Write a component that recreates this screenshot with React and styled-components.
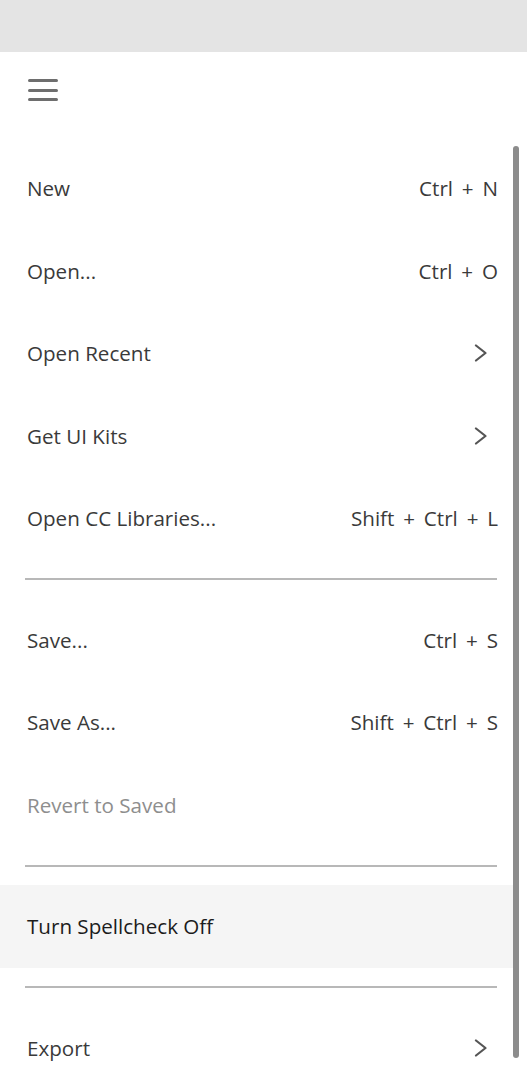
import React from 'react'
import styled, { createGlobalStyle } from 'styled-components'

const GlobalStyle = createGlobalStyle`
  html, body {
    margin: 0;
    padding: 0;
    background: #ffffff;
  }
  body {
    font-family: "Open Sans", "Noto Sans", "Liberation Sans", sans-serif;
    -webkit-font-smoothing: antialiased;
  }
`

const menu = [
  [
    { label: 'New', shortcut: 'Ctrl + N' },
    { label: 'Open...', shortcut: 'Ctrl + O' },
    { label: 'Open Recent', sub: true },
    { label: 'Get UI Kits', sub: true },
    { label: 'Open CC Libraries...', shortcut: 'Shift + Ctrl + L' },
  ],
  [
    { label: 'Save...', shortcut: 'Ctrl + S' },
    { label: 'Save As...', shortcut: 'Shift + Ctrl + S' },
    { label: 'Revert to Saved', disabled: true },
  ],
  [{ label: 'Turn Spellcheck Off', active: true }],
  [{ label: 'Export', sub: true }],
]

export default function App() {
  return (
    <Page>
      <GlobalStyle />
      <TopBar />
      <Header>
        <MenuButton aria-label='menu'>
          <span />
          <span />
          <span />
        </MenuButton>
      </Header>
      <List>
        {menu.map((group, gi) => (
          <React.Fragment key={gi}>
            {gi > 0 && <Divider />}
            {group.map((item) => (
              <Row key={item.label} $active={item.active}>
                <Label $disabled={item.disabled} $active={item.active}>
                  {item.label}
                </Label>
                {item.shortcut && <Shortcut>{item.shortcut}</Shortcut>}
                {item.sub && (
                  <Chevron viewBox='0 0 14 18'>
                    <path d='M2 1.5 L11.5 9 L2 16.5' />
                  </Chevron>
                )}
              </Row>
            ))}
          </React.Fragment>
        ))}
        <ScrollThumb />
      </List>
    </Page>
  )
}

const Page = styled.div`
  width: 527px;
  height: 1080px;
  overflow: hidden;
  background: #ffffff;
`

const TopBar = styled.div`
  height: 52px;
  background: #e4e4e4;
`

const Header = styled.div`
  height: 95px;
  display: flex;
  align-items: flex-start;
  padding: 27px 0 0 28px;
  box-sizing: border-box;
`

const MenuButton = styled.div`
  width: 30px;
  height: 22px;
  display: flex;
  flex-direction: column;
  justify-content: space-between;
  span {
    display: block;
    height: 3px;
    border-radius: 2px;
    background: #6e6e6e;
  }
`

const List = styled.div`
  position: relative;
`

const Row = styled.div`
  height: 82.5px;
  display: flex;
  align-items: center;
  justify-content: space-between;
  padding: 0 30px 0 27px;
  margin-right: 14px;
  background: ${(p) => (p.$active ? '#f5f5f5' : 'transparent')};
`

const Label = styled.span`
  font-size: 20.6px;
  color: ${(p) => (p.$disabled ? '#8e8e8e' : p.$active ? '#1c1c1c' : '#3a3a3a')};
`

const Shortcut = styled.span`
  font-size: 20.6px;
  word-spacing: 3.5px;
  color: #3a3a3a;
  margin-right: -15px;
`

const Chevron = styled.svg`
  width: 14px;
  height: 18px;
  fill: none;
  stroke: #555555;
  stroke-width: 2.2;
  stroke-linecap: round;
  stroke-linejoin: round;
  margin-right: -5px;
`

const Divider = styled.div`
  height: 2px;
  background: #b8b8b8;
  margin: 18.5px 30px 18.5px 25px;
`

const ScrollThumb = styled.div`
  position: absolute;
  top: -1px;
  right: 8px;
  width: 6px;
  height: 912px;
  border-radius: 3px;
  background: #8c8c8c;
`
